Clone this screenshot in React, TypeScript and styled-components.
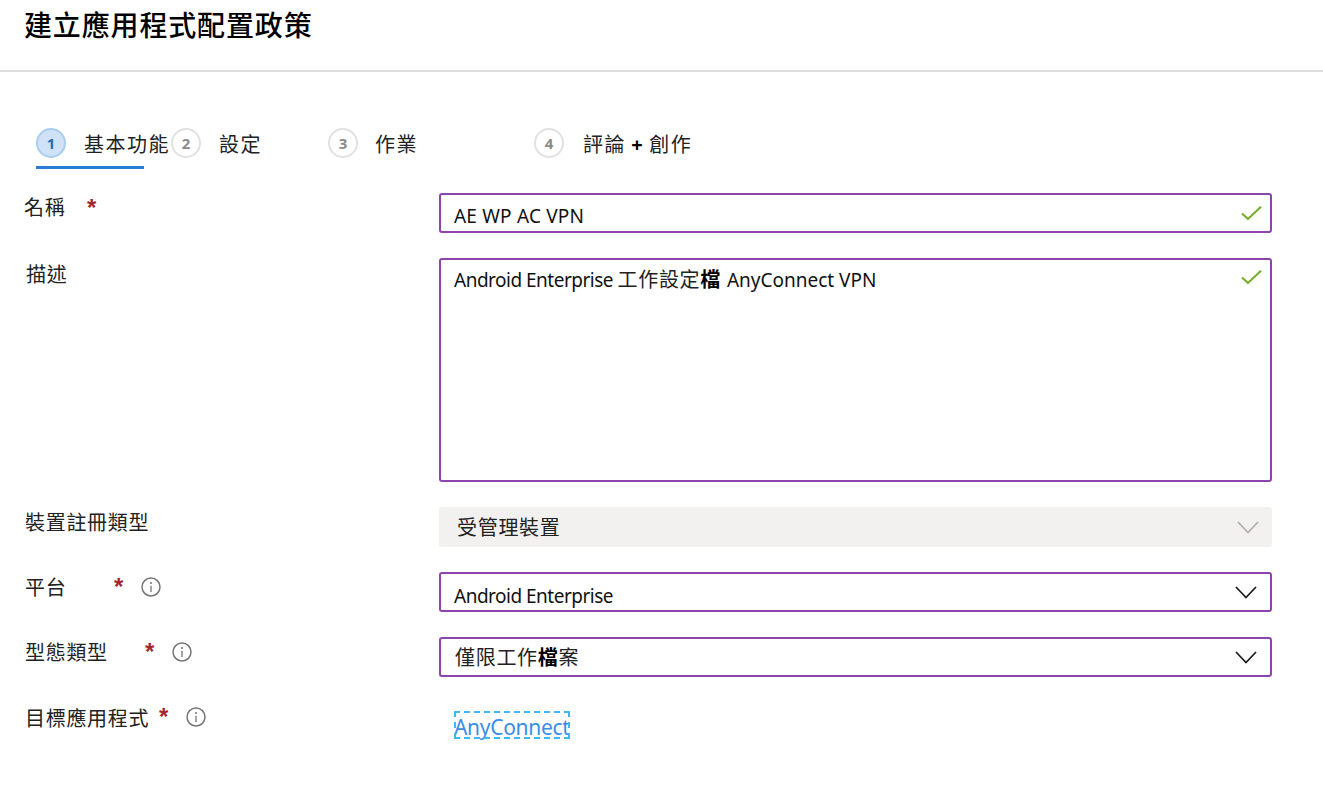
import React from "react";
import styled, { createGlobalStyle } from "styled-components";

const cjk = `"Noto Sans", "Noto Sans CJK TC", sans-serif`;

const Global = createGlobalStyle`
  html, body { margin: 0; padding: 0; background: #fff; }
  body { font-family: ${cjk}; color: #111; }
`;

const Page = styled.div`
  width: 1323px;
  height: 790px;
  overflow: hidden;
  background: #fff;
`;

const Header = styled.header`
  box-sizing: border-box;
  height: 72px;
  padding-left: 24px;
  border-bottom: 2px solid #dedede;
`;

const Title = styled.h1`
  margin: 0;
  padding-top: 6px;
  font-size: 28px;
  line-height: 38px;
  font-weight: 500;
  letter-spacing: 0.85px;
  color: #000;
`;

const Stepper = styled.nav`
  display: flex;
  height: 41px;
  margin-top: 56px;
  padding-left: 36px;
`;

const Step = styled.div<{ $width: number }>`
  position: relative;
  display: flex;
  width: ${(p) => p.$width}px;
  height: 30px;
  align-items: center;
`;

const Underline = styled.span`
  position: absolute;
  left: 0;
  top: 38px;
  width: 108px;
  height: 3px;
  background: #2b7cd3;
`;

const Badge = styled.span<{ $active?: boolean }>`
  display: flex;
  flex: none;
  box-sizing: border-box;
  width: 30px;
  height: 30px;
  align-items: center;
  justify-content: center;
  border-radius: 50%;
  border: 2px solid ${(p) => (p.$active ? "#a9cdf0" : "#e1e1e1")};
  background: ${(p) => (p.$active ? "#cfe2f7" : "#fff")};
  color: ${(p) => (p.$active ? "#2b6cb0" : "#8a8a8a")};
  font-size: 15px;
  font-weight: 700;
`;

const StepLabel = styled.span<{ $gap: number }>`
  margin: 4px 0 0 ${(p) => p.$gap}px;
  font-size: 20px;
  line-height: 30px;
  letter-spacing: 1.5px;
  word-spacing: -1.5px;
  white-space: nowrap;
  color: #222;
`;

const Plus = styled.span`
  font-weight: 700;
  color: #000;
`;

const Form = styled.div`
  display: grid;
  grid-template-columns: 415px 833px;
  grid-template-rows: 40px 224px 40px 40px 40px 38px;
  row-gap: 25px;
  margin-top: 24px;
  padding-left: 24px;
`;

const LabelCell = styled.div<{ $indent?: number }>`
  display: flex;
  align-items: flex-start;
  padding-left: ${(p) => p.$indent ?? 1}px;
  height: 30px;
`;

const LabelText = styled.span<{ $width: number; $top?: number }>`
  width: ${(p) => p.$width}px;
  flex: none;
  margin-top: ${(p) => p.$top ?? 1}px;
  font-size: 20px;
  line-height: 30px;
  letter-spacing: 0.7px;
  color: #222;
  white-space: nowrap;
`;

const Star = styled.span`
  width: 14px;
  flex: none;
  font-family: "Liberation Sans", sans-serif;
  font-size: 24px;
  line-height: 30px;
  font-weight: 700;
  color: #a4262c;
`;

const InfoWrap = styled.span`
  display: flex;
  margin-left: 13px;
  height: 30px;
  align-items: center;
  color: #757575;
`;

const Field = styled.div<{ $multi?: boolean; $disabled?: boolean; $right?: number }>`
  display: flex;
  box-sizing: border-box;
  width: 833px;
  align-items: ${(p) => (p.$multi ? "flex-start" : "center")};
  justify-content: space-between;
  padding: ${(p) => (p.$multi ? 5 : 0)}px ${(p) => p.$right ?? 13}px 0 13px;
  border: ${(p) => (p.$disabled ? "none" : "2px solid #8e44ad")};
  border-radius: 3px;
  background: ${(p) => (p.$disabled ? "#f2f1f0" : "#fff")};
  font-size: 19px;
  line-height: 30px;
  color: #111;
  white-space: nowrap;
`;

const ValueCjk = styled.span<{ $shift?: number }>`
  margin: 2px 0 0 ${(p) => p.$shift ?? 0}px;
  font-size: 20px;
  letter-spacing: 0.7px;
  color: #222;
`;

const Strong = styled.b`
  font-weight: 700;
  color: #000;
`;

const Latin = styled.span<{ $spacing?: number; $low?: number }>`
  margin-top: ${(p) => p.$low ?? 0}px;
  letter-spacing: ${(p) => p.$spacing ?? 0}px;
`;

const LinkCell = styled.div`
  padding: 9px 0 0 15px;
`;

const FocusLink = styled.a`
  display: inline-block;
  box-sizing: border-box;
  height: 28px;
  outline: 2px dashed #3db8f5;
  outline-offset: -2px;
  font-size: 21px;
  line-height: 32px;
  letter-spacing: -0.3px;
  color: #3a8ee6;
`;

const CheckSvg = styled.svg<{ $multi?: boolean }>`
  flex: none;
  margin-top: ${(p) => (p.$multi ? 5 : 0)}px;
`;

const ChevronSvg = styled.svg`
  flex: none;
`;

const Check = ({ multi }: { multi?: boolean }) => (
  <CheckSvg $multi={multi} width="21" height="15" viewBox="0 0 21 15" fill="none">
    <path d="M1 7.5 L7 13 L20 0.7" stroke="#6fae1f" strokeWidth="2" />
  </CheckSvg>
);

const Chevron = ({ color }: { color: string }) => (
  <ChevronSvg width="22" height="13" viewBox="0 0 22 13" fill="none">
    <path d="M1 1 L11 11.5 L21 1" stroke={color} strokeWidth="1.8" />
  </ChevronSvg>
);

const Info = () => (
  <svg width="20" height="20" viewBox="0 0 20 20" fill="none">
    <circle cx="10" cy="10" r="9" stroke="currentColor" strokeWidth="1.5" />
    <path d="M10 8.7 V15" stroke="currentColor" strokeWidth="1.3" />
    <circle cx="10" cy="5.9" r="1" fill="currentColor" />
  </svg>
);

export default function App() {
  return (
    <Page>
      <Global />
      <Header>
        <Title>建立應用程式配置政策</Title>
      </Header>
      <Stepper>
        <Step $width={135}>
          <Badge $active>1</Badge>
          <StepLabel $gap={18}>基本功能</StepLabel>
          <Underline />
        </Step>
        <Step $width={157}>
          <Badge>2</Badge>
          <StepLabel $gap={18}>設定</StepLabel>
        </Step>
        <Step $width={206}>
          <Badge>3</Badge>
          <StepLabel $gap={17}>作業</StepLabel>
        </Step>
        <Step $width={300}>
          <Badge>4</Badge>
          <StepLabel $gap={19}>評論 <Plus>+</Plus> 創作</StepLabel>
        </Step>
      </Stepper>
      <Form>
        <LabelCell $indent={0}>
          <LabelText $width={63} $top={0}>名稱</LabelText>
          <Star>*</Star>
        </LabelCell>
        <Field $right={8}>
          <Latin $spacing={0.2} $low={5}>AE WP AC VPN</Latin>
          <Check />
        </Field>

        <LabelCell $indent={2}>
          <LabelText $width={60} $top={2}>描述</LabelText>
        </LabelCell>
        <Field $multi $right={8}>
          <span>
            <Latin $spacing={-0.5}>Android Enterprise </Latin>
            <ValueCjk>工作設定<Strong>檔</Strong> </ValueCjk>
            <Latin>AnyConnect VPN</Latin>
          </span>
          <Check multi />
        </Field>

        <LabelCell>
          <LabelText $width={130}>裝置註冊類型</LabelText>
        </LabelCell>
        <Field $disabled>
          <ValueCjk $shift={5}>受管理裝置</ValueCjk>
          <Chevron color="#b3b0ad" />
        </Field>

        <LabelCell>
          <LabelText $width={89}>平台</LabelText>
          <Star>*</Star>
          <InfoWrap><Info /></InfoWrap>
        </LabelCell>
        <Field>
          <Latin $spacing={-0.5} $low={7}>Android Enterprise</Latin>
          <Chevron color="#201f1e" />
        </Field>

        <LabelCell>
          <LabelText $width={120}>型態類型</LabelText>
          <Star>*</Star>
          <InfoWrap><Info /></InfoWrap>
        </LabelCell>
        <Field>
          <ValueCjk $shift={1}>僅限工作<Strong>檔</Strong>案</ValueCjk>
          <Chevron color="#201f1e" />
        </Field>

        <LabelCell>
          <LabelText $width={134} $top={2}>目標應用程式</LabelText>
          <Star>*</Star>
          <InfoWrap><Info /></InfoWrap>
        </LabelCell>
        <LinkCell>
          <FocusLink>AnyConnect</FocusLink>
        </LinkCell>
      </Form>
    </Page>
  );
}
